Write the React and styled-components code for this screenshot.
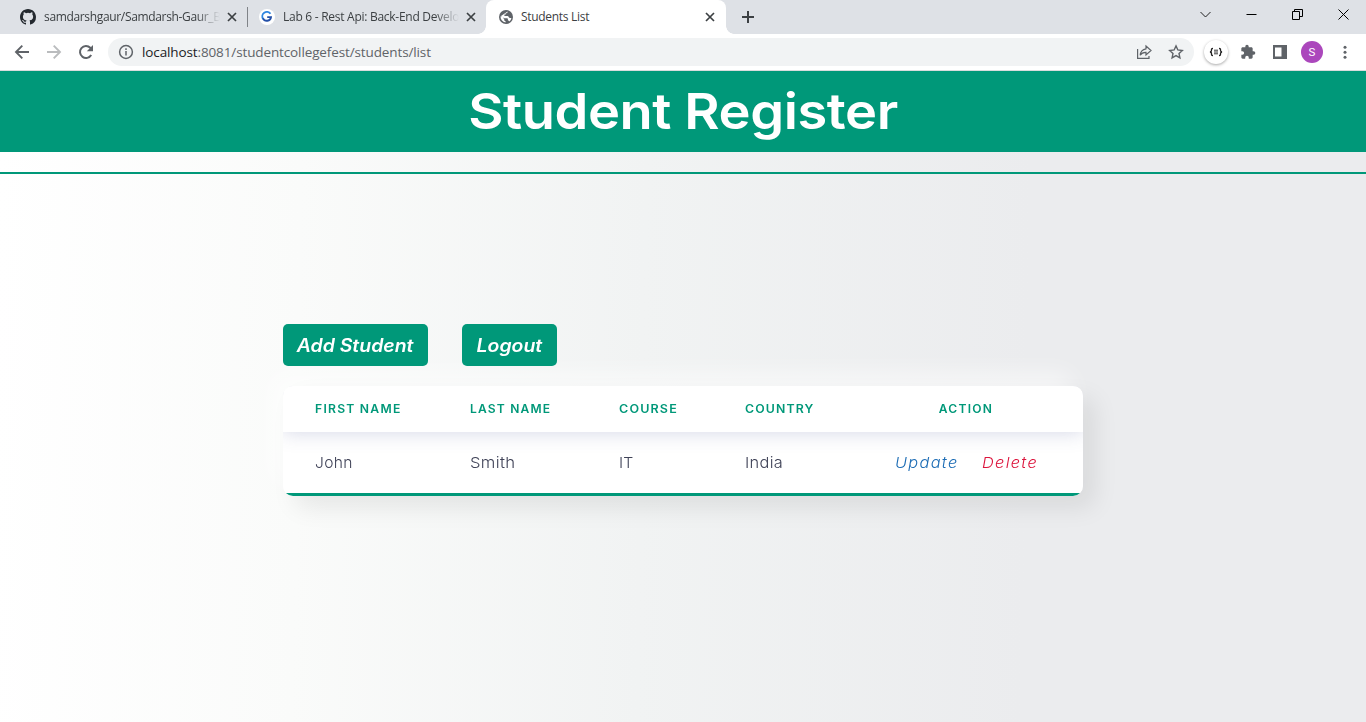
import React from "react";
import styled, { createGlobalStyle, css } from "styled-components";

const GREEN = "#009879";

const GlobalStyle = createGlobalStyle`
  *, *::before, *::after { box-sizing: border-box; }
  html, body { margin: 0; padding: 0; }
  body { overflow: hidden; background: #fff; }
`;

const Window = styled.div`
  display: flex;
  flex-direction: column;
  width: 1366px;
  height: 722px;
  overflow: hidden;
  font-family: "Open Sans", "Noto Sans", sans-serif;
`;

/* ---------- Browser chrome ---------- */

const TabStrip = styled.div`
  display: flex;
  height: 34px;
  flex: none;
  background: #dee1e6;
`;

const Tab = styled.div`
  display: flex;
  align-items: center;
  width: ${(p) => p.$width}px;
  padding-left: ${(p) => p.$pad}px;
  color: #3c4043;
  font-size: 12px;
  ${(p) =>
    p.$active &&
    css`
      background: #fff;
      border-radius: 8px 8px 0 0;
      position: relative;
      &::before,
      &::after {
        content: "";
        position: absolute;
        bottom: 0;
        width: 8px;
        height: 8px;
      }
      &::before {
        left: -8px;
        background: radial-gradient(circle at 0 0, transparent 7.5px, #fff 8px);
      }
      &::after {
        right: -8px;
        background: radial-gradient(circle at 100% 0, transparent 7.5px, #fff 8px);
      }
    `}
`;

const TabTitle = styled.span`
  width: 176px;
  margin-left: 8px;
  white-space: nowrap;
  line-height: 18px;
  letter-spacing: ${(p) => p.$spacing || 0}px;
  ${(p) => p.$fade && css`mask-image: linear-gradient(to right, #000 152px, transparent 176px);`}
`;

const TabDivider = styled.div`
  width: 1px;
  height: 20px;
  margin-top: 7px;
  background: #808388;
`;

const CloseIcon = styled.svg`
  width: 10px;
  height: 10px;
  margin-left: ${(p) => p.$gap}px;
  flex: none;
`;

const NewTab = styled.svg`
  width: 12px;
  height: 12px;
  margin: 11px 0 0 16px;
`;

const WindowControls = styled.div`
  display: flex;
  align-items: center;
  gap: 33px;
  height: 28px;
  margin-left: auto;
  padding-right: 16px;
  svg {
    width: 13px;
    height: 13px;
  }
`;

const Toolbar = styled.div`
  display: flex;
  align-items: center;
  height: 37px;
  flex: none;
  padding: 0 12px 0 14px;
  background: #fff;
  border-bottom: 1px solid #d9dcdd;
`;

const NavIcons = styled.div`
  display: flex;
  gap: 16px;
  width: 94px;
  svg {
    width: 16px;
    height: 16px;
  }
`;

const AddressBar = styled.div`
  display: flex;
  align-items: center;
  width: 1086px;
  height: 28px;
  padding: 0 10px;
  border-radius: 14px;
  background: #f1f3f4;
  > svg {
    width: 16px;
    height: 16px;
    flex: none;
  }
`;

const Url = styled.span`
  flex: 1;
  margin-left: 8px;
  color: #5f6368;
  font-size: 13.5px;
  line-height: 20px;
  letter-spacing: -0.12px;
  b {
    color: #202124;
    font-weight: 400;
  }
`;

const AddressActions = styled.div`
  display: flex;
  gap: 16px;
  svg {
    width: 16px;
    height: 16px;
  }
`;

const Extensions = styled.div`
  display: flex;
  align-items: center;
  margin-left: 10px;
  svg {
    width: 16px;
    height: 16px;
    flex: none;
  }
`;

const JsonBadge = styled.div`
  display: flex;
  align-items: center;
  justify-content: center;
  width: 24px;
  height: 24px;
  margin-right: 12px;
  border-radius: 50%;
  background: #fff;
  box-shadow: 0 1px 3px rgba(0, 0, 0, 0.35);
`;

const PanelIcon = styled.svg`
  margin: 0 13px 0 16px;
`;

const Avatar = styled.div`
  width: 22px;
  height: 22px;
  margin-right: 14px;
  border-radius: 50%;
  background: #ab47bc;
  color: #fff;
  font: 11.5px/22px Roboto, sans-serif;
  text-align: center;
`;

/* ---------- Page ---------- */

const Page = styled.main`
  display: flex;
  flex-direction: column;
  flex: 1;
  background: linear-gradient(91deg, #ffffff 0%, #fafbfa 22%, #f1f3f3 47%, #ebecee 75%);
  font-family: Inter, "Open Sans", sans-serif;
`;

const Header = styled.header`
  height: 81px;
  background: ${GREEN};
  text-align: center;
`;

const Title = styled.h1`
  margin: 0;
  color: #fff;
  font-size: 50px;
  font-weight: 600;
  line-height: 81px;
  letter-spacing: -0.4px;
  transform: scaleX(1.085);
`;

const Rule = styled.div`
  height: 2px;
  margin-top: 20px;
  background: ${GREEN};
`;

const Content = styled.section`
  width: 800px;
  margin: 150px 0 0 283px;
`;

const Actions = styled.div`
  display: flex;
  gap: 34px;
  margin-bottom: 20px;
`;

const Button = styled.button`
  width: ${(p) => p.$width}px;
  height: 42px;
  padding: 0;
  border: 0;
  border-radius: 5px;
  background: ${GREEN};
  color: #fff;
  font: italic 600 18px Inter, sans-serif;
  white-space: nowrap;
`;

/* Widens the letterforms without changing their height. */
const Wide = styled.span`
  display: inline-block;
  transform: scaleX(${(p) => p.$x});
  transform-origin: ${(p) => p.$origin || "left"};
`;

const Card = styled.div`
  height: 110px;
  overflow: hidden;
  border-radius: 10px;
  background: #fff;
`;

const CardShadow = styled.div`
  border-radius: 10px;
  box-shadow: 12px 12px 24px rgba(0, 0, 0, 0.08), -12px -12px 24px rgba(255, 255, 255, 0.6);
`;

const Row = styled.div`
  display: grid;
  grid-template-columns: 155px 149px 126px 136px 234px;
  align-items: center;
`;

const HeadRow = styled(Row)`
  height: 46px;
  box-shadow: 0 0 20px rgba(76, 87, 150, 0.25);
  background: #fff;
  color: ${GREEN};
  font-size: 11.5px;
  font-weight: 600;
`;

const BodyRow = styled(Row)`
  height: 64px;
  border-bottom: 3px solid ${GREEN};
  color: #3f4257;
  font-size: 15px;
  font-weight: 300;
`;

const Cell = styled.div`
  padding-left: 32px;
  letter-spacing: ${(p) => p.$spacing}px;
  ${(p) => p.$center && css`padding-left: 0; text-align: center;`}
`;

const LinkCell = styled.div`
  display: flex;
  padding-left: 46px;
`;

const ActionLink = styled.a`
  width: 87px;
  color: ${(p) => p.$color};
  font-style: italic;
  letter-spacing: 1.2px;
`;

const Close = ({ gap }) => (
  <CloseIcon $gap={gap} viewBox="0 0 10 10">
    <path d="M1 1l8 8M9 1L1 9" stroke="#3c4043" strokeWidth="1.7" fill="none" />
  </CloseIcon>
);

const GithubIcon = () => (
  <svg width="16" height="16" viewBox="0 0 16 16" fill="#24292f">
    <path d="M8 0C3.58 0 0 3.58 0 8c0 3.54 2.29 6.53 5.47 7.59.4.07.55-.17.55-.38 0-.19-.01-.82-.01-1.49-2.01.37-2.53-.49-2.69-.94-.09-.23-.48-.94-.82-1.13-.28-.15-.68-.52-.01-.53.63-.01 1.08.58 1.23.82.72 1.21 1.87.87 2.33.66.07-.52.28-.87.51-1.07-1.78-.2-3.64-.89-3.64-3.95 0-.87.31-1.59.82-2.15-.08-.2-.36-1.02.08-2.12 0 0 .67-.21 2.2.82a7.6 7.6 0 0 1 4 0c1.53-1.04 2.2-.82 2.2-.82.44 1.1.16 1.92.08 2.12.51.56.82 1.27.82 2.15 0 3.07-1.87 3.75-3.65 3.95.29.25.54.73.54 1.48 0 1.07-.01 1.93-.01 2.2 0 .21.15.46.55.38A8.01 8.01 0 0 0 16 8c0-4.42-3.58-8-8-8z" />
  </svg>
);

const GIcon = () => (
  <svg width="16" height="16" viewBox="0 0 16 16">
    <circle cx="8" cy="8" r="8" fill="#fff" />
    <path d="M11.5 4.7A4.3 4.3 0 0 0 4.2 10" fill="none" stroke="#2f86e0" strokeWidth="1.9" />
    <path d="M4 9.3a4.2 4.2 0 0 0 8-1.2H8.2" fill="none" stroke="#2450a8" strokeWidth="1.9" />
  </svg>
);

const GlobeIcon = () => (
  <svg width="14" height="14" viewBox="0 0 14 14">
    <circle cx="7" cy="7" r="7" fill="#5f6368" />
    <path d="M8.6 1.5c.1 1.300-.7 1.800-1.900 1.800v1.300H5.400V6h3.200c1.200 0 1 1.900 2.100 1.900h1.700a5.500 5.500 0 0 1-2.100 3.600c-.2-.8-.7-1.100-1.400-1.100V9.100c0-.6-.3-.9-.9-.9H5.400L1.600 6.300a5.500 5.500 0 0 0 4.900 6.100v-1.300c-.8 0-1.300-.6-1.300-1.300v-.7L2 6" fill="#fff" />
  </svg>
);

export default function App() {
  return (
    <>
      <GlobalStyle />
      <Window>
        <TabStrip>
          <Tab $width={247} $pad={20}>
            <GithubIcon />
            <TabTitle $fade $spacing={-0.34}>samdarshgaur/Samdarsh-Gaur_B</TabTitle>
            <Close gap={7} />
          </Tab>
          <TabDivider />
          <Tab $width={238} $pad={11}>
            <GIcon />
            <TabTitle $fade $spacing={-0.27}>Lab 6 - Rest Api: Back-End Develo</TabTitle>
            <Close gap={7} />
          </Tab>
          <Tab $active $width={240} $pad={13}>
            <GlobeIcon />
            <TabTitle $spacing={-0.3}>Students List</TabTitle>
            <Close gap={8} />
          </Tab>
          <NewTab viewBox="0 0 12 12">
            <path d="M6 0v12M0 6h12" stroke="#3c4043" strokeWidth="2" />
          </NewTab>
          <WindowControls>
            <svg viewBox="0 0 13 13" fill="none" stroke="#222"><path d="M1.5 4l5 5 5-5" /></svg>
            <svg viewBox="0 0 13 13" fill="none" stroke="#000"><path d="M1.5 6.5h10" /></svg>
            <svg viewBox="0 0 13 13" fill="none" stroke="#000"><path d="M1.5 3.5h7v8h-7zM3.5 3.5v-2h8v7h-3" /></svg>
            <svg viewBox="0 0 13 13" fill="none" stroke="#000"><path d="M1.5 1.5l10 10M11.5 1.5l-10 10" /></svg>
          </WindowControls>
        </TabStrip>

        <Toolbar>
          <NavIcons>
            <svg viewBox="0 0 16 16" fill="none" stroke="#5f6368" strokeWidth="1.9"><path d="M15 8H2.5M8.3 1.7L2 8l6.3 6.3" /></svg>
            <svg viewBox="0 0 16 16" fill="none" stroke="#babcbe" strokeWidth="1.9"><path d="M1 8h12.5M7.7 1.7L14 8l-6.3 6.3" /></svg>
            <svg viewBox="0 0 16 16">
              <path d="M13.2 11a6 6 0 1 1-.9-7.2l1.2 1.3" fill="none" stroke="#5f6368" strokeWidth="2" />
              <path d="M15 1v6.2H8.8z" fill="#5f6368" />
            </svg>
          </NavIcons>
          <AddressBar>
            <svg viewBox="0 0 16 16" fill="none" stroke="#5f6368" strokeWidth="1.5">
              <circle cx="8" cy="8" r="6.4" /><path d="M8 7v4.6M8 4.3v1.6" />
            </svg>
            <Url><b>localhost</b>:8081/studentcollegefest/students/list</Url>
            <AddressActions>
              <svg viewBox="0 0 16 16" fill="none" stroke="#5f6368" strokeWidth="1.2">
                <path d="M1.6 5v9.4H13V12" />
                <path d="M10 2l5 4.5-5 4.4V8.4C7.2 8.3 5.4 9.3 4.2 11.3c.3-3.5 2.300-6 5.800-6.500z" />
              </svg>
              <svg viewBox="0 0 16 16" fill="none" stroke="#5f6368" strokeWidth="1.4">
                <path d="M8 1.900l1.850 4.050 4.450.5-3.300 3 .9 4.400L8 11.600l-3.900 2.250.9-4.400-3.300-3 4.450-.5z" />
              </svg>
            </AddressActions>
          </AddressBar>
          <Extensions>
            <JsonBadge>
              <svg viewBox="0 0 16 16" fill="none" stroke="#222" strokeWidth="1.3">
                <path d="M5 4.500c-1.800 0-1.500.8-1.500 1.800S3.200 8 1.900 8c1.300 0 1.600.7 1.600 1.700s-.3 1.800 1.500 1.800M11 4.500c1.800 0 1.500.8 1.500 1.800S12.800 8 14.100 8c-1.300 0-1.600.7-1.600 1.700s.3 1.800-1.500 1.800" />
                <path d="M6 6.200h4M6 8h4M6 9.800h4" strokeWidth="0.9" />
              </svg>
            </JsonBadge>
            <svg viewBox="0 0 24 24" fill="#5f6368">
              <path d="M20.500 11H19V7c0-1.100-.9-2-2-2h-4V3.500a2.500 2.500 0 0 0-5 0V5H4c-1.100 0-2 .9-2 2v3.800h1.500a2.700 2.700 0 0 1 0 5.400H2V20c0 1.100.9 2 2 2h3.800v-1.500a2.700 2.700 0 0 1 5.400 0V22H17c1.100 0 2-.9 2-2v-4h1.500a2.500 2.500 0 0 0 0-5z" />
            </svg>
            <PanelIcon viewBox="0 0 16 16">
              <path d="M1 1h14v14H1zM3 3.500v9h6.500v-9z" fill="#5f6368" fillRule="evenodd" />
            </PanelIcon>
            <Avatar>S</Avatar>
            <svg viewBox="0 0 16 16" fill="#5f6368">
              <circle cx="8" cy="3.200" r="1.500" /><circle cx="8" cy="8.200" r="1.500" /><circle cx="8" cy="13.200" r="1.500" />
            </svg>
          </Extensions>
        </Toolbar>

        <Page>
          <Header><Title>Student Register</Title></Header>
          <Rule />
          <Content>
            <Actions>
              <Button $width={145}><Wide $x={1.08} $origin="center">Add Student</Wide></Button>
              <Button $width={95}><Wide $x={1.08} $origin="center">Logout</Wide></Button>
            </Actions>
            <CardShadow>
              <Card>
                <HeadRow>
                  <Cell $spacing={1.15}><Wide $x={1.06}>FIRST NAME</Wide></Cell>
                  <Cell $spacing={1.1}><Wide $x={1.05}>LAST NAME</Wide></Cell>
                  <Cell $spacing={1.05}><Wide $x={1.09}>COURSE</Wide></Cell>
                  <Cell $spacing={1.05}><Wide $x={1.07}>COUNTRY</Wide></Cell>
                  <Cell $center $spacing={1.2}><Wide $x={1.05} $origin="center">ACTION</Wide></Cell>
                </HeadRow>
                <BodyRow>
                  <Cell $spacing={0.3}><Wide $x={1.04}>John</Wide></Cell>
                  <Cell $spacing={0.3}><Wide $x={1.11}>Smith</Wide></Cell>
                  <Cell $spacing={0}><Wide $x={1.05}>IT</Wide></Cell>
                  <Cell $spacing={0.3}><Wide $x={1.09}>India</Wide></Cell>
                  <LinkCell>
                    <ActionLink $color="#1c6cb5"><Wide $x={1.09}>Update</Wide></ActionLink>
                    <ActionLink $color="#dc143c"><Wide $x={1.09}>Delete</Wide></ActionLink>
                  </LinkCell>
                </BodyRow>
              </Card>
            </CardShadow>
          </Content>
        </Page>
      </Window>
    </>
  );
}
